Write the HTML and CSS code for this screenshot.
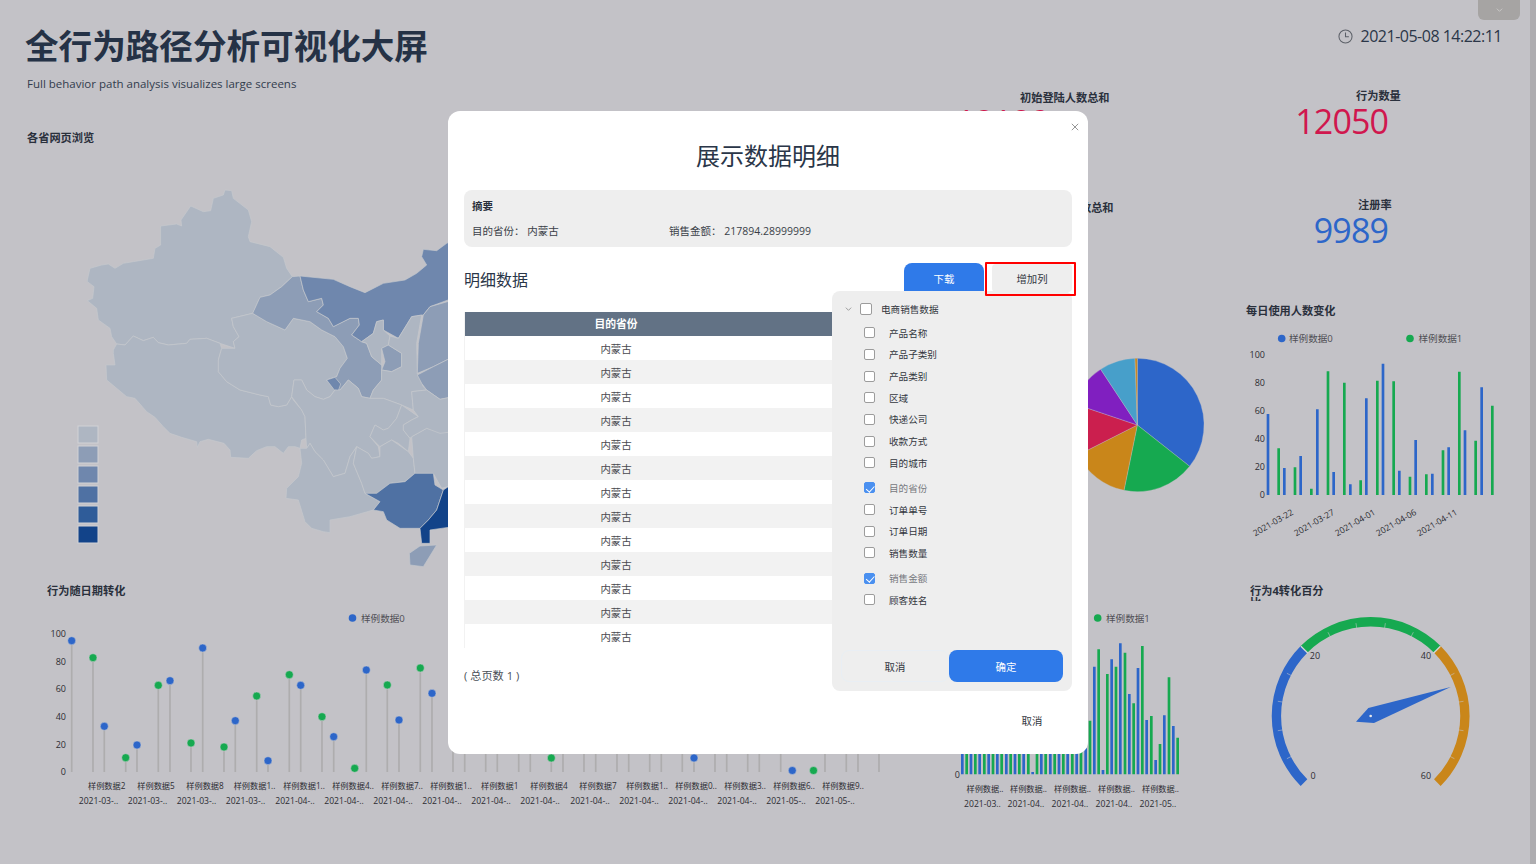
FILE: index.html
```html
<!DOCTYPE html>
<html lang="zh">
<head>
<meta charset="utf-8">
<title>全行为路径分析可视化大屏</title>
<link rel="stylesheet" href="styles.css">
</head>
<body>
<div class="screen">
  <div class="dash">
    <header class="head">
      <div>
        <h1 class="big-title">全行为路径分析可视化大屏</h1>
        <p class="sub-title">Full behavior path analysis visualizes large screens</p>
      </div>
      <div class="clock">
        <svg class="clock-icon" viewBox="0 0 16 16"><circle cx="8" cy="8" r="7" /><path d="M8 3.6V8.3H11.6" /></svg>
        <span>2021-05-08 14:22:11</span>
      </div>
    </header>

    <section class="cell map-cell">
      <h3 class="w-title map-title">各省网页浏览</h3>
      <svg class="chart map-svg" viewBox="0 149 940 431">
        <g transform="translate(0 180) scale(.33333)" class="prov">
          <path class="c1" d="M262 300L270 265 305 255 325 252 345 265 370 250 400 245 460 235 465 205 482 195 482 138 530 132 545 138 543 120 572 78 610 95 632 92 640 55 670 45 675 30 695 32 700 55 745 90 755 125 745 170 750 185 810 200 850 232 860 265 877 290 845 320 810 345 780 352 758 400 695 415 700 440 717 470 700 485 705 505 660 490 620 475 570 478 560 490 505 495 475 488 460 472 430 482 400 468 375 495 350 492 335 470 330 445 295 420 290 385 262 362 278 355 282 320 262 305Z"/>
          <path class="c1" d="M340 510L350 492 375 495 400 468 430 482 460 472 475 488 505 495 560 490 570 478 620 475 660 490 665 505 655 540 655 575 680 605 720 630 780 645 805 650 812 675 835 680 860 675 875 650 880 660 905 690 915 710 918 775 905 780 900 805 885 800 865 800 850 820 825 800 800 800 770 812 745 835 692 832 690 810 672 790 625 778 600 785 592 802 590 785 545 772 510 760 490 740 465 712 440 695 405 655 380 650 350 625 320 600 318 555 345 555 340 520Z"/>
          <path class="c1" d="M695 415L758 400 800 425 855 450 880 415 930 425 965 450 1005 470 1030 500 1042 535 1020 565 1010 590 980 600 1005 630 990 650 970 658 945 650 920 630 905 600 882 600 875 650 860 675 835 680 812 675 805 650 780 645 720 630 680 605 655 575 655 540 665 505 705 505 700 485 717 470 700 440Z"/>
          <path class="c2" d="M758 400L780 352 810 345 845 320 877 290 900 288 910 330 925 365 965 355 970 375 950 395 985 415 1000 440 1050 415 1075 415 1078 435 1055 465 1085 485 1100 490 1115 530 1145 555 1145 600 1120 630 1110 655 1085 650 1075 625 1045 600 1020 630 1005 630 980 600 1010 590 1020 565 1042 535 1030 500 1005 470 965 450 930 425 880 415 855 450 800 425Z"/>
          <path class="c3" d="M980 600L1005 592 1022 612 1015 632 1003 630Z"/>
          <path class="c3" d="M900 288L1000 298 1050 320 1095 338 1150 310 1215 300 1250 280 1280 255 1265 230 1270 208 1310 212 1340 190 1360 180 1360 355 1344 360 1290 380 1270 405 1235 410 1195 475 1150 450 1150 420 1130 425 1120 460 1085 485 1055 465 1078 435 1075 415 1050 415 1000 440 985 415 950 395 970 375 965 355 925 365 910 330Z"/>
          <path class="c1" d="M1085 485L1120 460 1130 425 1150 420 1150 450 1170 468 1165 495 1145 505 1145 555 1115 530 1100 490Z"/>
          <path class="c2" d="M1145 505L1165 495 1205 520 1205 560 1175 575 1145 570 1155 545Z"/>
          <path class="c1" d="M1265 405L1250 490 1252 580 1270 620 1280 630 1235 635 1240 690 1205 675 1150 655 1110 655 1120 630 1145 600 1145 570 1175 575 1205 560 1205 520 1165 495 1170 468 1195 475 1235 410Z"/>
          <path class="c2" d="M1360 360L1290 380 1270 405 1255 490 1252 580 1300 560 1360 530Z"/>
          <path class="c2" d="M1252 585L1300 560 1360 530 1360 650 1320 658 1280 630 1265 610Z"/>
          <path class="c1" d="M875 650L882 600 905 600 920 630 945 650 970 658 990 650 1005 630 1020 630 1045 600 1075 625 1085 650 1110 655 1150 655 1205 675 1190 715 1165 745 1150 750 1125 735 1110 770 1135 800 1140 830 1115 835 1105 820 1070 800 1050 830 1035 880 1000 890 970 840 945 815 930 790 920 805 918 775 915 710 905 690Z"/>
          <path class="c1" d="M1205 675L1255 710 1235 720 1210 735 1210 750 1230 775 1225 815 1195 790 1175 780 1140 800 1110 770 1125 735 1150 750 1165 745 1190 715Z"/>
          <path class="c1" d="M900 805L920 805 930 790 945 815 970 840 1000 890 1035 880 1050 830 1070 800 1060 850 1085 910 1095 940 1140 965 1120 990 1050 1010 990 1020 990 1058 970 1055 935 1045 915 1025 895 960 858 955 860 925 895 890 905 850Z"/>
          <path class="c1" d="M1060 850L1070 800 1105 820 1115 835 1140 830 1140 800 1175 780 1225 815 1240 835 1245 880 1215 905 1170 910 1130 940 1095 940 1085 910Z"/>
          <path class="c1" d="M1235 770L1280 745 1360 760 1360 915 1325 925 1300 880 1245 880 1240 835Z"/>
          <path class="c1" d="M1235 635L1280 630 1320 658 1360 650 1360 755 1320 760 1280 745 1235 770 1230 775 1210 750 1210 735 1235 720 1255 710 1240 690Z"/>
          <path class="c4" d="M1095 940L1130 940 1170 910 1215 905 1245 880 1300 880 1305 915 1330 930 1310 990 1285 1020 1260 1045 1200 1045 1160 1020 1150 995 1120 990 1140 965Z"/>
          <path class="c6" d="M1360 910L1330 930 1310 990 1285 1020 1260 1045 1265 1090 1290 1090 1290 1050 1360 1040Z"/>
          <path class="c2" d="M1228 1120L1260 1098 1310 1095 1270 1160 1230 1155Z"/>
        </g>
        <rect class="lg c1" x="78" y="426" width="20" height="17"/>
        <rect class="lg c2" x="78" y="446" width="20" height="17"/>
        <rect class="lg c3" x="78" y="466" width="20" height="17"/>
        <rect class="lg c4" x="78" y="486" width="20" height="17"/>
        <rect class="lg c5" x="78" y="506" width="20" height="17"/>
        <rect class="lg c6" x="78" y="526" width="20" height="17"/>
      </svg>
    </section>

    <section class="cell kpis">
      <div class="kpi">
        <h3 class="w-title kpi-a1">初始登陆人数总和</h3>
        <div class="kpi-num red kpi-hidden">12180</div>
      </div>
      <div class="kpi">
        <h3 class="w-title kpi-a2">注册登陆人数总和</h3>
        <div class="kpi-num blue kpi-hidden">9989</div>
      </div>
    </section>

    <section class="cell kpis-r">
      <div class="kpi kpi-r">
        <h3 class="w-title kpi-b1">行为数量</h3>
        <div class="kpi-num red kpi-right">12050</div>
      </div>
      <div class="kpi kpi-r">
        <h3 class="w-title kpi-b2">注册率</h3>
        <div class="kpi-num blue kpi-right">9989</div>
      </div>
    </section>

    <section class="cell">
      <svg class="chart pie-svg" viewBox="940 300 290 280">
        <g transform="translate(1080 290) scale(.33333)" class="pie">
          <path class="f-blue" d="M172 405V205A200 200 0 0 1 329 529Z"/>
          <path class="f-green" d="M172 405L329 529A200 200 0 0 1 132 601Z"/>
          <path class="f-orange" d="M172 405L132 601A200 200 0 0 1 -6 495Z"/>
          <path class="f-red" d="M172 405L-6 495A200 200 0 0 1 -18 341Z"/>
          <path class="f-purple" d="M172 405L-18 341A200 200 0 0 1 62 238Z"/>
          <path class="f-sky" d="M172 405L62 238A200 200 0 0 1 165 205Z"/>
          <path class="f-orange" d="M172 405L165 205A200 200 0 0 1 172 205Z"/>
        </g>
      </svg>
    </section>

    <section class="cell">
      <h3 class="w-title bar-title">每日使用人数变化</h3>
      <svg class="chart bar-svg" viewBox="1230 322 306 258">
        <circle class="f-blue" cx="1281.7" cy="338.5" r="3.8"/>
        <text class="leg" x="1289" y="342">样例数据0</text>
        <circle class="f-green" cx="1410" cy="338.5" r="3.8"/>
        <text class="leg" x="1418.5" y="342">样例数据1</text>
        <g class="ax end">
          <text x="1265" y="358">100</text>
          <text x="1265" y="386">80</text>
          <text x="1265" y="414">60</text>
          <text x="1265" y="442">40</text>
          <text x="1265" y="470">20</text>
          <text x="1265" y="498">0</text>
          <text class="date" transform="translate(1294 514) rotate(-30)">2021-03-22</text>
          <text class="date" transform="translate(1335 514) rotate(-30)">2021-03-27</text>
          <text class="date" transform="translate(1376 514) rotate(-30)">2021-04-01</text>
          <text class="date" transform="translate(1417 514) rotate(-30)">2021-04-06</text>
          <text class="date" transform="translate(1458 514) rotate(-30)">2021-04-11</text>
        </g>
        <g transform="translate(1080 290) scale(.33333)">
          <path class="bar s-blue" d="M564 615V372M613 615V534M662 615V498M712 615V358M761 615V546M811 615V583M859 615V325M909 615V221M958 615V542M1007 615V450M1057 615V551M1106 615V472M1155 615V421M1205 615V292"/>
          <path class="bar s-green" d="M596 615V475M645 615V532M694 615V596M744 615V244M793 615V278M842 615V571M892 615V272M941 615V274M990 615V560M1039 615V553M1089 615V481M1138 615V245M1187 615V452M1237 615V347"/>
        </g>
      </svg>
    </section>

    <section class="cell">
      <h3 class="w-title lol-title">行为随日期转化</h3>
      <svg class="chart lol-svg" viewBox="0 602 940 262">
        <circle class="f-blue" cx="352.5" cy="618" r="3.8"/>
        <text class="leg" x="361" y="621.5">样例数据0</text>
        <g class="ax end">
          <text x="66" y="637">100</text>
          <text x="66" y="664.5">80</text>
          <text x="66" y="692">60</text>
          <text x="66" y="720">40</text>
          <text x="66" y="747.5">20</text>
          <text x="66" y="775">0</text>
        </g>
        <path class="stem" d="M71.7 772V641M93 772V658M104.3 772V726M125.7 772V758M137 772V745M158.3 772V685M170 772V681M191 772V743M202.7 772V648M224 772V747M235.3 772V721M256.7 772V696M268 772V761M289.3 772V675M300.7 772V685M322 772V717M333.7 772V737M354.7 772V768M366.3 772V670M387.3 772V685M399 772V720M420.3 772V668M432 772V693M453 772V700M464.7 772V700M485.7 772V700M497.3 772V700M518.7 772V700M530.3 772V700M551.3 772V758M563 772V700M584 772V700M595.7 772V700M617 772V700M628.7 772V700M649.7 772V700M661.3 772V700M682.3 772V700M694 772V758M715 772V700M726.7 772V700M747.7 772V700M759.3 772V700M780.7 772V700M792.3 772V771M813.3 772V771M825 772V700M846.3 772V700M858 772V700M879 772V700"/>
        <g class="dots">
          <circle class="f-blue" cx="71.7" cy="640.7" r="4"/><circle class="f-green" cx="93" cy="657.7" r="4"/>
          <circle class="f-blue" cx="104.3" cy="726.3" r="4"/><circle class="f-green" cx="125.7" cy="757.7" r="4"/>
          <circle class="f-blue" cx="137" cy="745" r="4"/><circle class="f-green" cx="158.3" cy="685.3" r="4"/>
          <circle class="f-blue" cx="170" cy="680.7" r="4"/><circle class="f-green" cx="191" cy="743" r="4"/>
          <circle class="f-blue" cx="202.7" cy="648" r="4"/><circle class="f-green" cx="224" cy="747" r="4"/>
          <circle class="f-blue" cx="235.3" cy="720.7" r="4"/><circle class="f-green" cx="256.7" cy="696" r="4"/>
          <circle class="f-blue" cx="268" cy="760.7" r="4"/><circle class="f-green" cx="289.3" cy="674.7" r="4"/>
          <circle class="f-blue" cx="300.7" cy="685.3" r="4"/><circle class="f-green" cx="322" cy="716.7" r="4"/>
          <circle class="f-blue" cx="333.7" cy="736.7" r="4"/><circle class="f-green" cx="354.7" cy="768.3" r="4"/>
          <circle class="f-blue" cx="366.3" cy="670" r="4"/><circle class="f-green" cx="387.3" cy="685" r="4"/>
          <circle class="f-blue" cx="399" cy="720" r="4"/><circle class="f-green" cx="420.3" cy="668" r="4"/>
          <circle class="f-blue" cx="432" cy="693.3" r="4"/>
          <circle class="f-green" cx="551.3" cy="758" r="4"/><circle class="f-blue" cx="694" cy="758" r="4"/>
          <circle class="f-blue" cx="792.3" cy="770.5" r="4"/><circle class="f-green" cx="813.5" cy="770.5" r="4"/>
        </g>
        <g class="ax mid cat">
          <text x="106.7" y="788.5">样例数据2</text><text x="156" y="788.5">样例数据5</text>
          <text x="205" y="788.5">样例数据8</text><text x="254.5" y="788.5">样例数据1..</text>
          <text x="304" y="788.5">样例数据1..</text><text x="353" y="788.5">样例数据4..</text>
          <text x="402" y="788.5">样例数据7..</text><text x="451" y="788.5">样例数据1..</text>
          <text x="499.7" y="788.5">样例数据1</text><text x="549" y="788.5">样例数据4</text>
          <text x="598" y="788.5">样例数据7</text><text x="647" y="788.5">样例数据1..</text>
          <text x="696" y="788.5">样例数据0..</text><text x="745" y="788.5">样例数据3..</text>
          <text x="794" y="788.5">样例数据6..</text><text x="843" y="788.5">样例数据9..</text>
        </g>
        <g class="ax mid dates">
          <text x="98.5" y="804">2021-03-..</text><text x="147.5" y="804">2021-03-..</text>
          <text x="196.5" y="804">2021-03-..</text><text x="245.5" y="804">2021-03-..</text>
          <text x="295" y="804">2021-04-..</text><text x="344" y="804">2021-04-..</text>
          <text x="393" y="804">2021-04-..</text><text x="442" y="804">2021-04-..</text>
          <text x="491" y="804">2021-04-..</text><text x="540" y="804">2021-04-..</text>
          <text x="590" y="804">2021-04-..</text><text x="639" y="804">2021-04-..</text>
          <text x="688" y="804">2021-04-..</text><text x="737" y="804">2021-04-..</text>
          <text x="786" y="804">2021-05-..</text><text x="835" y="804">2021-05-..</text>
        </g>
      </svg>
    </section>

    <section class="cell">
      <svg class="chart stack-svg" viewBox="940 580 290 284">
        <circle class="f-green" cx="1097.7" cy="618" r="3.8"/>
        <text class="leg" x="1106" y="621.5">样例数据1</text>
        <text class="ax end" x="960" y="778">0</text>
        <g transform="translate(940 600) scale(.33333)">
          <path class="bar s-blue" d="M67 523V400M93 523V400M119 523V400M146 523V400M172 523V400M199 523V400M225 523V400M251 523V400M278 523V516M304 523V400M331 523V400M357 523V400M383 523V400M410 523V400M437 523V445M463 523V200M489 523V510M515 523V178M541 523V130M568 523V282M594 523V204M620 523V360M647 523V480M673 523V346M700 523V378"/>
          <path class="bar s-green" d="M80 523V400M106 523V400M133 523V400M159 523V400M185 523V400M212 523V400M238 523V400M265 523V400M291 523V400M317 523V400M344 523V400M370 523V400M397 523V400M423 523V400M450 523V362M476 523V148M502 523V222M528 523V200M555 523V158M581 523V310M607 523V138M634 523V348M660 523V432M687 523V232M713 523V413"/>
        </g>
        <g class="ax mid cat">
          <text x="985" y="791.5">样例数据..</text><text x="1028.5" y="791.5">样例数据..</text>
          <text x="1072.5" y="791.5">样例数据..</text><text x="1116.5" y="791.5">样例数据..</text>
          <text x="1160.5" y="791.5">样例数据..</text>
        </g>
        <g class="ax mid dates">
          <text x="982.5" y="807">2021-03..</text><text x="1026" y="807">2021-04..</text>
          <text x="1070" y="807">2021-04..</text><text x="1114" y="807">2021-04..</text>
          <text x="1158" y="807">2021-05..</text>
        </g>
      </svg>
    </section>

    <section class="cell">
      <h3 class="w-title gauge-title">行为4转化百分比</h3>
      <svg class="chart gauge-svg" viewBox="1230 602 306 262">
        <g transform="translate(1220 570) scale(.33333)">
          <path class="arc s-blue" d="M252 638A283 283 0 0 1 252 238"/>
          <path class="arc s-green" d="M252 238A283 283 0 0 1 652 238"/>
          <path class="arc s-orange" d="M652 238A283 283 0 0 1 652 638"/>
          <g class="tick">
            <path d="M170 438H186" transform="rotate(-27 452 438)"/>
            <path d="M170 438H186" transform="rotate(-9 452 438)"/>
            <path d="M170 438H186" transform="rotate(9 452 438)"/>
            <path d="M170 438H186" transform="rotate(27 452 438)"/>
            <path class="gap" d="M156 438H186" transform="rotate(45 452 438)"/>
            <path d="M170 438H186" transform="rotate(63 452 438)"/>
            <path d="M170 438H186" transform="rotate(81 452 438)"/>
            <path d="M170 438H186" transform="rotate(99 452 438)"/>
            <path d="M170 438H186" transform="rotate(117 452 438)"/>
            <path class="gap" d="M156 438H186" transform="rotate(135 452 438)"/>
            <path d="M170 438H186" transform="rotate(153 452 438)"/>
            <path d="M170 438H186" transform="rotate(171 452 438)"/>
            <path d="M170 438H186" transform="rotate(189 452 438)"/>
            <path d="M170 438H186" transform="rotate(207 452 438)"/>
          </g>
          <path class="f-blue" d="M692 351L445 414 408 455 462 459Z"/>
          <circle class="pin" cx="452" cy="438" r="4"/>
        </g>
        <g class="ax">
          <text class="mid" x="1315" y="659">20</text>
          <text class="mid" x="1426" y="659">40</text>
          <text class="mid" x="1313" y="779">0</text>
          <text class="mid" x="1426" y="779">60</text>
        </g>
      </svg>
    </section>
  </div>

  <div class="scrollbar"></div>
  <button class="pull-tab" aria-label="展开"><svg viewBox="0 0 10 6"><path d="M1 1L5 5 9 1"/></svg></button>

  <div class="overlay">
    <div class="modal">
      <button class="close" aria-label="关闭"><svg viewBox="0 0 10 10"><path d="M1 1L9 9M9 1L1 9"/></svg></button>
      <h2 class="modal-title">展示数据明细</h2>
      <div class="summary">
        <div class="sum-head">摘要</div>
        <div class="sum-row">
          <span class="sum-a">目的省份： 内蒙古</span>
          <span>销售金额： 217894.28999999</span>
        </div>
      </div>
      <div class="detail-bar">
        <div class="detail-title">明细数据</div>
        <button class="btn-blue">下载</button>
        <button class="btn-add">增加列</button>
      </div>
      <div class="table-wrap">
        <table class="table">
          <thead><tr><th>目的省份</th><th>销售金额</th></tr></thead>
          <tbody>
            <tr><td>内蒙古</td><td></td></tr>
            <tr><td>内蒙古</td><td></td></tr>
            <tr><td>内蒙古</td><td></td></tr>
            <tr><td>内蒙古</td><td></td></tr>
            <tr><td>内蒙古</td><td></td></tr>
            <tr><td>内蒙古</td><td></td></tr>
            <tr><td>内蒙古</td><td></td></tr>
            <tr><td>内蒙古</td><td></td></tr>
            <tr><td>内蒙古</td><td></td></tr>
            <tr><td>内蒙古</td><td></td></tr>
            <tr><td>内蒙古</td><td></td></tr>
            <tr><td>内蒙古</td><td></td></tr>
            <tr><td>内蒙古</td><td></td></tr>
          </tbody>
        </table>
      </div>
      <div class="pager">( 总页数 1 )</div>
      <div class="foot"><button class="btn-plain">取消</button></div>

      <div class="popover">
        <div class="tree-root">
          <svg class="chev" viewBox="0 0 10 6"><path d="M1 1L5 5 9 1"/></svg>
          <span class="cb"></span>
          <span>电商销售数据</span>
        </div>
        <ul class="tree">
          <li><span class="cb"></span>产品名称</li>
          <li><span class="cb"></span>产品子类别</li>
          <li><span class="cb"></span>产品类别</li>
          <li><span class="cb"></span>区域</li>
          <li><span class="cb"></span>快递公司</li>
          <li><span class="cb"></span>收款方式</li>
          <li><span class="cb"></span>目的城市</li>
          <li class="on"><span class="cb"></span>目的省份</li>
          <li><span class="cb"></span>订单单号</li>
          <li><span class="cb"></span>订单日期</li>
          <li><span class="cb"></span>销售数量</li>
          <li class="on"><span class="cb"></span>销售金额</li>
          <li><span class="cb"></span>顾客姓名</li>
        </ul>
        <div class="pop-btns">
          <button class="pop-cancel">取消</button>
          <button class="pop-ok">确定</button>
        </div>
      </div>
    </div>
  </div>
</div>
</body>
</html>
```
FILE: styles.css
```css
* { box-sizing: border-box; }
html, body { margin: 0; padding: 0; height: 100%; overflow: hidden; }
body {
  background: #c3c2c7;
  color: #2b3648;
  font-family: "Open Sans", "Noto Sans CJK SC", sans-serif;
}
button { font-family: inherit; cursor: pointer; }
h1, h2, h3, p, ul { margin: 0; padding: 0; }

.screen { position: relative; width: 1536px; height: 864px; overflow: hidden; }
.dash {
  display: grid;
  grid-template-columns: 940px 290px 306px;
  grid-template-rows: 91px 209px 280px 284px;
  width: 1536px;
  height: 864px;
}
.cell { min-width: 0; min-height: 0; }

/* header */
.head {
  grid-column: 1 / -1;
  display: flex;
  justify-content: space-between;
  align-items: flex-start;
  padding: 23px 34px 0 25px;
}
.big-title { font-size: 33.6px; line-height: 46px; font-weight: 700; color: #253246; white-space: nowrap; }
.sub-title { margin: 8px 0 0 2px; font-size: 11.5px; line-height: 14px; color: #323c4d; }
.clock { display: flex; align-items: center; gap: 8px; margin-top: 2px; font-size: 16px; line-height: 22px; letter-spacing: -.5px; color: #2b3648; }
.clock-icon { width: 15px; height: 15px; fill: none; stroke: #5c6068; stroke-width: 1.1; }

/* widgets */
.w-title { font-size: 11.2px; font-weight: 700; line-height: 22px; color: #2a303c; white-space: nowrap; }
.chart { display: block; width: 100%; overflow: hidden; }
.map-cell { grid-row: 2 / 4; padding-top: 36px; }
.map-title { padding-left: 27px; }
.map-svg { height: 431px; }
.bar-title { padding-left: 16px; }
.lol-title { padding-left: 47px; }
.bar-svg { height: 258px; }
.lol-svg { height: 262px; }
.pie-svg { height: 280px; }
.stack-svg { height: 284px; }
.gauge-svg { height: 262px; }
.gauge-title { width: 80px; height: 22px; margin-left: 20px; padding-top: 5px; white-space: normal; line-height: 12px; overflow: hidden; clip-path: inset(0 0 1px 0); }

/* KPI */
.kpis { padding-top: 1px; }
.kpis-r { margin-top: -1px; }
.kpi { height: 110px; }
.kpi-r { height: 109px; }
.kpi .w-title { line-height: 12px; }
.kpi-a1 { padding-left: 80px; }
.kpi-a2 { padding-left: 84px; }
.kpi-b1 { padding-left: 126px; }
.kpi-b2 { padding-left: 128px; }
.kpi-num { font-size: 34px; line-height: 34px; letter-spacing: -.9px; margin-top: 1px; }
.kpi-hidden { padding-left: 16px; }
.kpi-right { text-align: right; width: 158px; margin-top: 2px; }
.red { color: #d0174e; }
.blue { color: #2d66c9; }

/* svg */
.leg { font-size: 9.6px; fill: #4f4f55; }
.ax text, .ax { font-size: 9px; fill: #2d2d33; }
.ax .date, .dates text { font-size: 8.6px; }
.cat text { font-size: 8.2px; }
.end text, text.end { text-anchor: end; }
.mid text, text.mid { text-anchor: middle; }
.f-blue { fill: #2d66c9; }
.f-green { fill: #16a950; }
.f-orange { fill: #c9861a; }
.f-red { fill: #cb1f4e; }
.f-purple { fill: #801fc0; }
.f-sky { fill: #479fca; }
.s-blue { stroke: #2d66c9; }
.s-green { stroke: #16a950; }
.s-orange { stroke: #c9861a; }
.bar { stroke-width: 8; fill: none; }
.stem { stroke: #aeadae; stroke-width: 1.7; fill: none; }
.dots circle { stroke: #cfcfd3; stroke-width: .5; }
.pie path { stroke: #c3c2c7; stroke-width: 1; }
.arc { stroke-width: 28; fill: none; }
.tick path { stroke: #c9c9cc; stroke-width: 1.5; fill: none; }
.tick .gap { stroke-width: 4; stroke: #d5d5d8; }
.pin { fill: #e8e8ea; }
.prov path { stroke: #c5c8cd; stroke-width: 2; stroke-linejoin: round; }
.c1 { fill: #aeb6c2; }
.c2 { fill: #8d9db6; }
.c3 { fill: #6f87ad; }
.c4 { fill: #4f71a3; }
.c5 { fill: #2f5c99; }
.c6 { fill: #124389; }
.lg { stroke: #d2d2d6; stroke-width: 1; }

/* chrome */
.scrollbar { position: absolute; top: 0; right: 0; width: 6px; height: 864px; background: #aeadb0; }
.pull-tab { position: absolute; top: -1px; left: 1478px; width: 42px; height: 21px; padding: 0; border: 0; border-radius: 0 0 6px 6px; background: #a6a4a3; display: flex; align-items: center; justify-content: center; }
.pull-tab svg { width: 7px; height: 4px; fill: none; stroke: #d0cfce; stroke-width: 1.2; }

/* modal */
.overlay { position: absolute; inset: 0; display: flex; justify-content: center; align-items: flex-start; padding-top: 111px; }
.modal {
  position: relative;
  width: 640px;
  height: 643px;
  background: #fff;
  border-radius: 12px;
  padding: 0 16px;
}
.close { position: absolute; top: 12px; right: 9px; width: 8px; height: 9px; padding: 0; background: none; border: 0; display: flex; }
.close svg { width: 8px; height: 8px; fill: none; stroke: #888; stroke-width: 1.1; }
.modal-title { font-size: 24px; line-height: 34px; font-weight: 400; text-align: center; padding-top: 28px; height: 79px; color: #2a3648; }
.summary { height: 57px; background: #eee; border-radius: 8px; padding: 8px 8px 0; font-size: 10.5px; color: #3a3f48; }
.sum-head { font-weight: 700; line-height: 16px; color: #2a303c; }
.sum-row { display: flex; margin-top: 9px; line-height: 16px; }
.sum-a { width: 197px; }
.detail-bar { position: relative; display: flex; align-items: flex-start; height: 65px; padding-top: 16px; }
.detail-title { font-size: 16px; line-height: 34px; flex: 1; color: #2a3648; }
.btn-blue { width: 80px; height: 40px; margin-right: 8px; border: 0; border-radius: 8px 8px 0 0; background: #2f7ae9; color: #fff; font-size: 10.4px; line-height: 32px; padding: 0 0 8px; }
.btn-add { position: relative; z-index: 2; width: 80px; height: 28px; border: 0; border-radius: 4px; background: #eee; color: #33373e; font-size: 10.4px; padding: 0; margin-top: 1px; }
.btn-add::after { content: ""; position: absolute; top: -2px; right: -4px; bottom: -4px; left: -7px; border: 2px solid #f00; border-radius: 1px; pointer-events: none; }
.table-wrap { height: 336px; overflow: hidden; border-left: 1px solid #f2f2f2; }
.table { width: 100%; border-collapse: collapse; table-layout: fixed; font-size: 10.4px; }
.table th { height: 24px; padding: 0 0 2px; background: #627285; color: #fff; font-weight: 600; font-size: 10.8px; }
.table td { height: 24px; padding: 0; text-align: center; color: #4a4a50; }
.table tbody tr:nth-child(even) td { background: #f2f2f2; }
.table th:first-child, .table td:first-child { width: 302px; }
.pager { margin-top: 20px; font-size: 11.2px; line-height: 16px; color: #4a5058; }
.foot { display: flex; justify-content: flex-end; margin-top: 24px; }
.btn-plain { width: 80px; height: 24px; border: 0; background: none; color: #33373e; font-size: 10.4px; padding: 0; }

/* popover */
.popover {
  position: absolute;
  z-index: 1;
  left: 384px;
  top: 180px;
  width: 240px;
  height: 400px;
  background: #eee;
  border-radius: 8px;
  font-size: 9.6px;
  color: #33373e;
}
.tree-root { display: flex; align-items: center; height: 36px; padding-left: 13px; }
.chev { width: 7px; height: 4px; margin-right: 8px; fill: none; stroke: #8a8a8a; stroke-width: 1.2; }
.cb { position: relative; flex: none; display: inline-block; width: 11px; height: 11px; border: 1px solid #9c9c9c; border-radius: 2px; background: #fff; }
.tree-root .cb { width: 12px; height: 12px; margin-right: 9px; }
.tree { list-style: none; margin-top: -5px; }
.tree li { display: flex; align-items: center; height: 21.65px; padding-left: 32px; }
.tree li .cb { margin-right: 14px; }
.tree .on { margin-top: 3.7px; color: #77797e; }
.on .cb { background: #4a90f0; border-color: #4a90f0; }
.on .cb::after { content: ""; position: absolute; left: 2.5px; top: .5px; width: 3.5px; height: 6.5px; border: solid #fff; border-width: 0 1.2px 1.2px 0; transform: rotate(42deg); }
.pop-btns { position: absolute; left: 9px; top: 359px; display: flex; }
.pop-cancel { width: 108px; height: 32px; border: 1px solid #e9eef4; border-radius: 8px; background: none; font-size: 10.4px; color: #33373e; padding: 0; }
.pop-ok { width: 114px; height: 32px; border: 0; border-radius: 8px; background: #2f7ae9; color: #fff; font-size: 10.4px; padding: 0; }
```
